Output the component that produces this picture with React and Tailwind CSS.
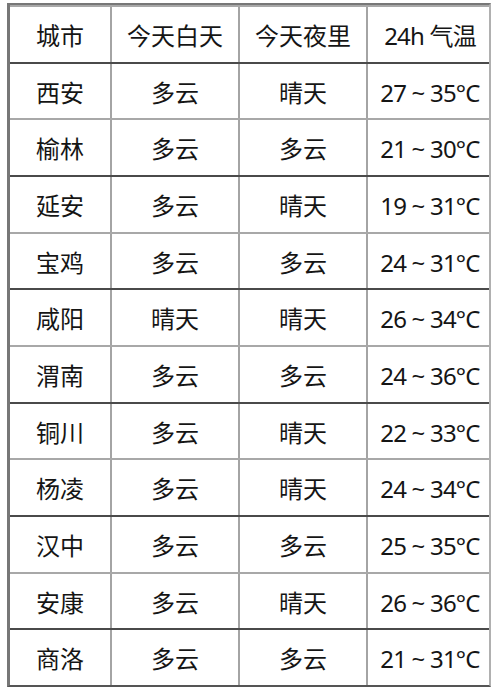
import React from 'react';

const rows = [
  ['西安', '多云', '晴天', '27 ~ 35°C'],
  ['榆林', '多云', '多云', '21 ~ 30°C'],
  ['延安', '多云', '晴天', '19 ~ 31°C'],
  ['宝鸡', '多云', '多云', '24 ~ 31°C'],
  ['咸阳', '晴天', '晴天', '26 ~ 34°C'],
  ['渭南', '多云', '多云', '24 ~ 36°C'],
  ['铜川', '多云', '晴天', '22 ~ 33°C'],
  ['杨凌', '多云', '晴天', '24 ~ 34°C'],
  ['汉中', '多云', '多云', '25 ~ 35°C'],
  ['安康', '多云', '晴天', '26 ~ 36°C'],
  ['商洛', '多云', '多云', '21 ~ 31°C'],
];

const font = { fontFamily: '"Noto Sans", "Noto Sans CJK SC", sans-serif' };

function Row({ cells, dark, header }) {
  return (
    <div
      className={`flex-1 grid grid-cols-[100px_128px_128px_126px] ${
        dark ? 'border-t-2 border-[#4a4a4a]' : 'border-t-2 border-[#a8a8a8]'
      } ${header ? 'border-t-0' : ''}`}
    >
      {cells.map((c, i) => (
        <div
          key={i}
          className={`flex items-center justify-center pt-[3px] text-[24px] text-[#151515] ${
            i > 0 ? 'border-l-2 border-[#a4a4a4]' : ''
          } ${i === 3 ? 'tracking-[-0.8px] text-[23px]' : ''}`}
        >
          {c}
        </div>
      ))}
    </div>
  );
}

export default function App() {
  return (
    <div className="w-[500px] h-[693px] bg-white pt-[3px] pl-[7px]" style={font}>
      <div className="w-[484px] h-[684px] flex flex-col border-2 border-l-[3px] border-[#777] border-r-[#b0b0b0] border-b-[#555]">
        <Row header cells={['城市', '今天白天', '今天夜里', '24h 气温']} />
        {rows.map((r, i) => (
          <Row key={i} cells={r} dark={i % 2 === 0} />
        ))}
      </div>
    </div>
  );
}
